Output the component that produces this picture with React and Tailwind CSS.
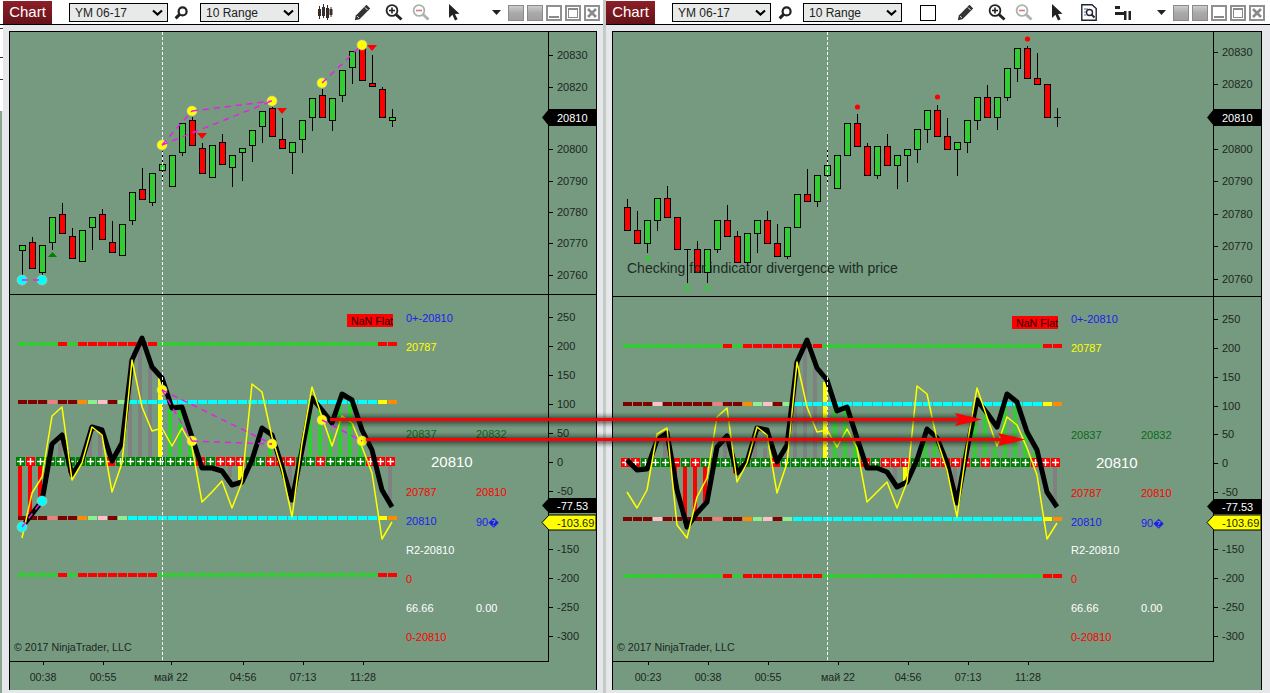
const BG = '#759a7f';
const UP = '#32cd32';
const DOWN = '#ff0000';

// candles: [color, bodyTop, bodyBottom, high, low] in page pixels
const leftCandles = [
  ['g', 245, 250, 245, 275], ['r', 242, 268, 237, 268], ['g', 245, 272, 245, 275], ['g', 217, 242, 217, 250],
  ['r', 214, 233, 203, 233], ['r', 236, 258, 228, 258], ['g', 230, 261, 230, 261], ['g', 217, 227, 217, 250],
  ['r', 214, 239, 209, 239], ['r', 242, 252, 221, 252], ['g', 224, 255, 224, 255], ['g', 192, 220, 192, 225],
  ['r', 189, 199, 168, 199], ['g', 173, 202, 173, 206], ['g', 164, 170, 151, 181], ['g', 155, 186, 155, 186],
  ['g', 123, 152, 123, 156], ['r', 120, 145, 117, 145], ['r', 148, 173, 143, 173], ['g', 145, 177, 145, 177],
  ['r', 142, 164, 134, 164], ['g', 155, 167, 155, 187], ['g', 148, 152, 148, 181], ['g', 130, 145, 130, 162],
  ['g', 111, 126, 111, 143], ['r', 108, 136, 107, 136], ['r', 139, 148, 118, 148], ['g', 142, 152, 142, 174],
  ['g', 120, 139, 120, 153], ['g', 98, 117, 98, 131], ['r', 95, 117, 89, 117], ['g', 98, 120, 98, 131],
  ['g', 70, 95, 70, 102], ['g', 51, 67, 51, 84], ['r', 48, 80, 45, 80], ['r', 83, 86, 55, 86],
  ['r', 89, 117, 87, 117], ['g', 117, 120, 109, 127],
];

const rightCandles = [
  ['r', 207, 230, 199, 230], ['r', 230, 243, 211, 243], ['g', 220, 243, 220, 253], ['g', 198, 220, 198, 231],
  ['r', 198, 217, 186, 217], ['r', 217, 249, 217, 249], ['d', 249, 249, 249, 283], ['r', 249, 272, 241, 272],
  ['g', 249, 272, 249, 283], ['g', 220, 249, 220, 253], ['r', 220, 236, 205, 236], ['r', 236, 262, 231, 262],
  ['g', 233, 262, 233, 265], ['g', 220, 233, 220, 253], ['r', 220, 243, 211, 243], ['r', 243, 256, 224, 256],
  ['g', 227, 256, 227, 259], ['g', 194, 227, 194, 227], ['r', 194, 201, 169, 201], ['g', 175, 201, 175, 207],
  ['g', 165, 175, 150, 182], ['g', 155, 188, 155, 188], ['g', 123, 155, 123, 155], ['r', 123, 146, 114, 146],
  ['r', 146, 175, 143, 175], ['g', 146, 175, 146, 179], ['r', 146, 165, 134, 165], ['g', 155, 165, 155, 189],
  ['g', 149, 155, 149, 182], ['g', 129, 149, 129, 163], ['g', 110, 129, 110, 143], ['r', 110, 136, 105, 136],
  ['r', 136, 149, 118, 149], ['g', 142, 149, 142, 176], ['g', 120, 142, 120, 153], ['g', 97, 120, 97, 130],
  ['r', 97, 117, 85, 117], ['g', 97, 117, 97, 130], ['g', 68, 97, 68, 101], ['g', 48, 68, 48, 82],
  ['r', 48, 78, 46, 78], ['r', 78, 84, 53, 84], ['r', 84, 117, 84, 117], ['d', 117, 117, 108, 127],
];

const LINE = { g: UP, r: '#ff0000' };
const MID = { d: '#800000', p: '#ffc0cb', s: '#f08080', o: '#ff8c00', l: '#90ee90', c: '#00ffff', y: '#ffff00' };

const leftBars = [
  [20, 466, 517, DOWN], [30, 466, 513, DOWN], [40, 466, 500, DOWN], [70, 466, 473, DOWN],
  [60, 443, 457, 'gray'], [90, 427, 457, 'gray'], [100, 433, 457, 'gray'], [130, 360, 457, 'gray'], [140, 340, 457, 'gray'], [150, 367, 457, 'gray'],
  [160, 378, 457, '#ffff00'], [170, 407, 457, UP], [180, 410, 457, UP], [190, 440, 457, UP],
  [230, 466, 477, 'gray'], [240, 466, 480, '#ffff00'], [270, 443, 457, UP], [290, 466, 500, 'gray'], [300, 450, 457, UP],
  [310, 400, 457, UP], [320, 410, 457, UP], [330, 433, 457, UP], [340, 395, 457, UP], [350, 400, 457, UP], [360, 437, 457, UP],
  [390, 466, 503, 'gray'],
];

const rightBars = [
  [675, 467, 488, DOWN], [685, 467, 523, DOWN], [695, 467, 513, DOWN], [705, 467, 502, DOWN], [735, 467, 473, DOWN],
  [665, 443, 458, 'gray'], [725, 443, 458, 'gray'], [755, 440, 458, 'gray'], [765, 448, 458, 'gray'], [795, 362, 458, 'gray'], [805, 342, 458, 'gray'], [815, 368, 458, 'gray'],
  [825, 382, 458, '#ffff00'], [835, 410, 458, UP], [845, 410, 458, UP], [855, 435, 458, UP],
  [895, 467, 480, 'gray'], [905, 467, 481, '#ffff00'], [925, 430, 458, UP], [935, 443, 458, UP],
  [955, 467, 503, 'gray'], [965, 450, 458, UP], [975, 410, 458, UP], [985, 413, 458, UP], [995, 447, 458, UP],
  [1005, 395, 458, UP], [1015, 402, 458, UP], [1025, 433, 458, UP], [1035, 450, 458, UP], [1055, 467, 503, 'gray'],
];

const leftBlack = '22,527 42,501 52,444 62,435 72,475 82,460 92,427 102,430 112,461 122,443 132,360 142,338 152,367 162,378 172,408 182,407 192,437 202,468 212,468 222,471 232,485 242,482 252,460 262,428 272,435 282,467 292,500 302,450 312,398 322,410 332,423 342,394 352,400 362,430 372,450 382,490 392,507';
const leftYellow = '22,538 32,493 42,477 52,416 62,407 72,480 82,463 92,427 102,435 112,492 122,463 132,360 142,407 152,431 162,428 172,446 182,428 192,447 202,502 212,492 222,481 232,508 242,482 252,384 262,392 272,437 282,470 292,517 302,443 312,387 322,417 332,446 342,416 352,423 362,447 372,473 382,539 392,522';
const rightBlack = '627,460 637,470 647,469 657,440 667,433 677,490 687,527 697,513 707,502 717,447 727,436 737,473 747,462 757,428 767,430 777,462 787,445 797,362 807,340 817,368 827,380 837,411 847,407 857,438 867,468 877,468 887,472 897,487 907,482 917,460 927,429 937,438 947,463 957,503 967,450 977,400 987,413 997,427 1007,394 1017,402 1027,432 1037,450 1047,492 1057,507';
const rightYellow = '627,492 637,508 647,490 657,434 667,428 677,525 687,538 697,497 707,478 717,417 727,408 737,482 747,463 757,427 767,435 777,493 787,463 797,362 807,407 817,432 827,430 837,447 847,429 857,448 867,502 877,492 887,482 897,508 907,482 917,386 927,394 937,440 947,470 957,517 967,445 977,388 987,417 997,446 1007,417 1017,425 1027,448 1037,475 1047,539 1057,523';

const leftCharts = {
  id: 'l',
  x0: 10, y0: 32, w: 586, h: 658,
  axisX: 548, splitY: 294, candleX: 22.5, candles: leftCandles,
  lineX: 18, lineTop: 342, lineMidA: 400, lineMidB: 516, lineBot: 573,
  lines: 'ggggrgrrrrrrrrgggggggggggggggggggggg' + 'rr',
  mids: 'dddsddolpdl' + 'c'.repeat(25) + 'yo',
  cellX: 16, cellY: 457,
  cells: 'G+ R+ G+ G- G+ G- G- G+ G+ R- G+ G+ G+ G+ G+ G+ G+ G+ R- G+ R+ R+ R+ G- G+ R+ R- R+ G- G+ R+ G+ G+ G+ G+ R+ R+ R+',
  bars: leftBars, black: leftBlack, yellow: leftYellow,
  cursorX: 162.5,
  priceTicks: [[20830, 55], [20820, 87], [20800, 149], [20790, 181], [20780, 212], [20770, 243], [20760, 275]],
  indTicks: [[250, 317], [200, 346], [150, 375], [100, 404], [50, 433], [0, 462], [-50, 491], [-150, 549], [-200, 578], [-250, 607], [-300, 636]],
  tagPrice: 118, tagBlack: 505.5, tagYellow: 522.5,
  times: [['00:38', 43], ['00:55', 103], ['май 22', 171], ['04:56', 243], ['07:13', 303], ['11:28', 363]],
  copyX: 14,
  labelX: 406, labelDy: 0, flagY: 314,
};

const rightCharts = {
  id: 'r',
  x0: 613, y0: 32, w: 648, h: 658,
  axisX: 1213, splitY: 296, candleX: 627.5, candles: rightCandles,
  lineX: 623, lineTop: 344, lineMidA: 402, lineMidB: 517, lineBot: 574,
  lines: 'ggggggggggrgrrrrrrrr' + 'g'.repeat(22) + 'rr',
  mids: 'dddpdddddsddolpdl' + 'c'.repeat(25) + 'yo',
  cellX: 621, cellY: 458,
  cells: 'R+ R+ G+ G+ G+ R- G+ R+ G+ G- G+ G- G- G+ G+ R- G+ G+ G+ G+ G+ G+ G+ G+ R- G+ R+ R+ R+ G- G+ R+ R- R+ R- G+ R+ G+ G+ G+ G+ R+ R+ R+',
  bars: rightBars, black: rightBlack, yellow: rightYellow,
  cursorX: 827.5,
  priceTicks: [[20830, 52], [20820, 84], [20800, 149], [20790, 181], [20780, 214], [20770, 246], [20760, 279]],
  indTicks: [[250, 319], [200, 348], [150, 377], [100, 406], [50, 434], [0, 463], [-50, 492], [-150, 549], [-200, 578], [-250, 607], [-300, 636]],
  tagPrice: 118, tagBlack: 506.5, tagYellow: 522.5,
  times: [['00:23', 648], ['00:38', 708], ['00:55', 768], ['май 22', 838], ['04:56', 908], ['07:13', 968], ['11:28', 1028]],
  copyX: 617,
  labelX: 1071, labelDy: 1, flagY: 316,
};

function Candles({ list, startX }) {
  return (
    <g shapeRendering="crispEdges">
      {list.map(([c, top, bot, hi, lo], i) => {
        const x = startX + i * 10;
        if (c === 'd') {
          return (
            <g key={i} stroke="black">
              <line x1={x} x2={x} y1={hi} y2={lo} />
              <line x1={x - 3.5} x2={x + 3.5} y1={top + 0.5} y2={top + 0.5} />
            </g>
          );
        }
        return (
          <g key={i} stroke="black">
            <line x1={x} x2={x} y1={hi} y2={lo} />
            <rect x={x - 3} y={top + 0.5} width="6" height={bot - top} fill={c === 'g' ? UP : DOWN} />
          </g>
        );
      })}
    </g>
  );
}

function Dashes({ startX, y, codes, palette }) {
  return (
    <g shapeRendering="crispEdges">
      {codes.split('').map((c, i) => (
        <rect key={i} x={startX + i * 10} y={y} width="9" height="4" fill={palette[c]} />
      ))}
    </g>
  );
}

function Cells({ startX, y, codes }) {
  return (
    <g>
      {codes.split(' ').map((c, i) => {
        const x = startX + i * 10;
        const cx = x + 4.5;
        const cy = y + 4.5;
        return (
          <g key={i}>
            <rect x={x} y={y} width="9" height="9" fill={c[0] === 'G' ? '#008000' : '#ff0000'} shapeRendering="crispEdges" />
            <rect x={cx - 3.5} y={cy - 0.7} width="7" height="1.4" fill="white" />
            {c[1] === '+' && <rect x={cx - 0.7} y={cy - 3.5} width="1.4" height="7" fill="white" />}
          </g>
        );
      })}
    </g>
  );
}

function Label({ x, y, fill, size = 11, children }) {
  return (
    <text x={x} y={y + 4} fill={fill} fontSize={size}>
      {children}
    </text>
  );
}

function Dot({ x, y, fill }) {
  return <circle cx={x} cy={y} r="5" fill={fill} stroke="#c4c8a8" strokeOpacity="0.6" />;
}

function Link({ a, b }) {
  return (
    <line x1={a[0]} y1={a[1]} x2={b[0]} y2={b[1]} stroke="#e81fe8" strokeWidth="1.5" strokeDasharray="6 5" />
  );
}

function LeftMarks() {
  const tri = [[202, 133], [282, 108], [372, 45]];
  return (
    <g>
      {[[22, 280], [42, 280], [22, 527], [42, 501]].map(([x, y], i) => <Dot key={i} x={x} y={y} fill="#00ffff" />)}
      {[[162, 145], [192, 111], [272, 101], [322, 83], [362, 45], [162, 390], [192, 441], [272, 444], [322, 420], [362, 441]].map(([x, y], i) => (
        <Dot key={i} x={x} y={y} fill="#ffff00" />
      ))}
      <Link a={[22, 280]} b={[42, 280]} />
      <Link a={[162, 145]} b={[192, 111]} />
      <Link a={[192, 111]} b={[272, 101]} />
      <Link a={[162, 145]} b={[272, 101]} />
      <Link a={[322, 83]} b={[362, 45]} />
      <Link a={[22, 527]} b={[42, 501]} />
      <Link a={[162, 390]} b={[192, 441]} />
      <Link a={[162, 390]} b={[272, 444]} />
      <Link a={[192, 441]} b={[272, 444]} />
      <Link a={[322, 420]} b={[362, 441]} />
      {tri.map(([x, y], i) => <polygon key={i} points={`${x - 5},${y} ${x + 5},${y} ${x},${y + 6}`} fill="#ff0000" />)}
      <polygon points="48,257 57,257 52.5,252" fill="#008000" />
    </g>
  );
}

function RightMarks() {
  return (
    <g>
      {[[857, 107], [937, 97], [1027, 39]].map(([x, y], i) => <circle key={i} cx={x + 0.5} cy={y} r="2.6" fill="#ff0000" />)}
      {[[647, 259], [687, 288], [707, 288]].map(([x, y], i) => (
        <polygon key={i} points={`${x + 0.5},${y - 3} ${x + 3.5},${y} ${x + 0.5},${y + 3} ${x - 2.5},${y}`} fill={UP} />
      ))}
      <text x="627" y="273" fontSize="14" fill="#1c2a24">Checking for indicator divergence with price</text>
    </g>
  );
}

function Tag({ x, y1, y2, fill, stroke, text, color }) {
  const mid = (y1 + y2) / 2;
  return (
    <g>
      <path d={`M${x - 7} ${mid} L${x} ${y1} H${x + 47} V${y2} H${x} Z`} fill={fill} stroke={stroke} />
      <text x={x + 8} y={mid + 4} fontSize="11" fill={color}>{text}</text>
    </g>
  );
}

function Chart({ d, children }) {
  const ax = d.axisX;
  const lx = d.labelX;
  const dy = d.labelDy;
  return (
    <svg width={d.w} height={d.h} viewBox={`${d.x0} ${d.y0} ${d.w} ${d.h}`} className="block">
      <defs>
        <clipPath id={`flag-${d.id}`}>
          <rect x={lx - 59} y={d.flagY} width="46" height="13" />
        </clipPath>
      </defs>
      <Candles list={d.candles} startX={d.candleX} />
      <g shapeRendering="crispEdges">
        {d.bars.map(([x, a, b, c], i) => <rect key={i} x={x - 2} y={a} width="4" height={b - a} fill={c} />)}
      </g>
      <Dashes startX={d.lineX} y={d.lineTop} codes={d.lines} palette={LINE} />
      <Dashes startX={d.lineX} y={d.lineMidA} codes={d.mids} palette={MID} />
      <Dashes startX={d.lineX} y={d.lineMidB} codes={d.mids} palette={MID} />
      <Dashes startX={d.lineX} y={d.lineBot} codes={d.lines} palette={LINE} />
      <Cells startX={d.cellX} y={d.cellY} codes={d.cells} />
      <polyline points={d.black} fill="none" stroke="black" strokeWidth="5" strokeLinejoin="round" />
      <polyline points={d.yellow} fill="none" stroke="#ffff00" strokeWidth="1.5" strokeLinejoin="round" />
      <line x1={d.cursorX} x2={d.cursorX} y1="32" y2="661" stroke="white" strokeDasharray="3 2" shapeRendering="crispEdges" />
      {children}

      {/* axis frame */}
      <g stroke="black" shapeRendering="crispEdges">
        <line x1={ax + 0.5} x2={ax + 0.5} y1="32" y2="662" />
        <line x1={d.x0} x2={d.x0 + d.w} y1={d.splitY + 0.5} y2={d.splitY + 0.5} />
        <line x1={d.x0} x2={ax + 1} y1="661.5" y2="661.5" />
        {[...d.priceTicks, ...d.indTicks].map(([, y], i) => <line key={i} x1={ax} x2={ax + 5} y1={y + 0.5} y2={y + 0.5} />)}
        {d.times.map(([, x], i) => <line key={i} x1={x + 0.5} x2={x + 0.5} y1="661" y2="665" />)}
      </g>
      {[...d.priceTicks, ...d.indTicks].map(([v, y], i) => (
        <Label key={i} x={ax + 9} y={y} fill="#20261f">{v}</Label>
      ))}
      {d.times.map(([t, x], i) => (
        <text key={i} x={x} y="681" fontSize="10.67" fill="#20261f" textAnchor="middle">{t}</text>
      ))}
      <text x={d.copyX} y="651" fontSize="10.67" fill="#20261f">© 2017 NinjaTrader, LLC</text>

      {/* price tags */}
      <Tag x={ax + 1} y1={109} y2={126} fill="black" text="20810" color="white" />
      <Tag x={ax + 1} y1={d.tagBlack - 7.5} y2={d.tagBlack + 7.5} fill="black" text="-77.53" color="white" />
      <Tag x={ax + 1} y1={d.tagYellow - 7.5} y2={d.tagYellow + 7.5} fill="#ffff00" stroke="black" text="-103.69" color="#20261f" />

      {/* indicator read-outs */}
      <rect x={lx - 59} y={d.flagY} width="46" height="13" fill="#ff0000" />
      <text x={lx - 55} y={d.flagY + 10.5} fontSize="10.67" fill="#200" clipPath={`url(#flag-${d.id})`}>NaN Flat</text>
      <Label x={lx} y={318 + dy} fill="#1c1cf0">0+-20810</Label>
      <Label x={lx} y={347 + dy} fill="#ffff00">20787</Label>
      <Label x={lx} y={434 + dy} fill="#0a6a18">20837</Label>
      <Label x={lx + 70} y={434 + dy} fill="#0a6a18">20832</Label>
      <Label x={lx + 25} y={463 + dy} fill="white" size={15}>20810</Label>
      <Label x={lx} y={492 + dy} fill="#ff0000">20787</Label>
      <Label x={lx + 70} y={492 + dy} fill="#ff0000">20810</Label>
      <Label x={lx} y={521 + dy} fill="#1c1cf0">20810</Label>
      <Label x={lx + 70} y={522 + dy} fill="#1c1cf0">90�</Label>
      <Label x={lx} y={550} fill="white">R2-20810</Label>
      <Label x={lx} y={579} fill="#ff0000">0</Label>
      <Label x={lx} y={608} fill="white">66.66</Label>
      <Label x={lx + 70} y={608} fill="white">0.00</Label>
      <Label x={lx} y={637} fill="#ff0000">0-20810</Label>
    </svg>
  );
}

function Select({ label, className }) {
  return (
    <div className={`flex h-[19px] w-[99px] shrink-0 items-center justify-between border border-black bg-[#e8e9e9] pl-[5px] pr-[4px] text-[12px] text-[#222] ${className}`}>
      <span>{label}</span>
      <svg width="11" height="7" viewBox="0 0 11 7"><path d="M1 1.5 L5.5 5.5 L10 1.5" fill="none" stroke="black" strokeWidth="2.2" /></svg>
    </div>
  );
}

function SearchIcon({ className }) {
  return (
    <svg width="14" height="14" viewBox="0 0 14 14" className={`shrink-0 ${className}`}>
      <circle cx="8.6" cy="5.4" r="4" fill="none" stroke="#222" strokeWidth="2.2" />
      <line x1="5.6" y1="8.4" x2="1.6" y2="12.4" stroke="#222" strokeWidth="3" />
    </svg>
  );
}

function PencilIcon({ className }) {
  return (
    <svg width="17" height="17" viewBox="0 0 17 17" className={`shrink-0 ${className}`}>
      <path d="M12.5 0.8 L16.2 4.5 L5.5 15.2 L0.8 16.2 L1.8 11.5 Z" fill="#333" />
      <path d="M11 3.5 L13.5 6" stroke="white" strokeWidth="1" />
      <path d="M3 12 L5 14" stroke="white" strokeWidth="0.8" />
    </svg>
  );
}

function ZoomIcon({ plus, className }) {
  const c = plus ? '#222' : '#aeb2ae';
  return (
    <svg width="18" height="17" viewBox="0 0 18 17" className={`shrink-0 ${className}`}>
      <circle cx="7" cy="6.5" r="5.4" fill="none" stroke={c} strokeWidth="1.8" />
      <line x1="4" y1="6.5" x2="10" y2="6.5" stroke={plus ? '#222' : '#c88080'} strokeWidth="1.6" />
      {plus && <line x1="7" y1="3.5" x2="7" y2="9.5" stroke="#222" strokeWidth="1.6" />}
      <line x1="11" y1="10.5" x2="16.5" y2="15.5" stroke={c} strokeWidth="3" />
    </svg>
  );
}

function ArrowIcon({ className }) {
  return (
    <svg width="11" height="17" viewBox="0 0 11 17" className={`shrink-0 ${className}`}>
      <polygon points="0,0 0,14 3.4,10.8 6,16.5 8.6,15.3 6,10 10.5,9.8" fill="#222" />
    </svg>
  );
}

function BarsIcon({ className }) {
  return (
    <svg width="16" height="17" viewBox="0 0 16 17" className={`shrink-0 ${className}`}>
      <path d="M2.5 2 V15 M6.5 0 V14 M10.5 1 V16 M14 3 V13" stroke="#3a2a20" />
      <rect x="1" y="5" width="3" height="7" fill="#3a2a20" />
      <rect x="5" y="3" width="3" height="9" fill="#333" />
      <rect x="9" y="4" width="3" height="10" fill="#3a2a20" />
      <rect x="12.5" y="5" width="3" height="6" fill="#333" />
    </svg>
  );
}

function ReportIcon({ className }) {
  return (
    <svg width="16" height="17" viewBox="0 0 16 17" className={`shrink-0 ${className}`}>
      <path d="M0.8 0.8 H11 L15.2 4.5 V16.2 H0.8 Z" fill="white" stroke="#223" strokeWidth="1.4" />
      <path d="M3 5 H7 M3 8 H5 M3 11 H5" stroke="#567" />
      <circle cx="8.5" cy="8.5" r="3" fill="none" stroke="#223" strokeWidth="1.4" />
      <line x1="10.5" y1="10.5" x2="13.5" y2="13.5" stroke="#223" strokeWidth="2" />
    </svg>
  );
}

function RowsIcon({ className }) {
  return (
    <svg width="17" height="16" viewBox="0 0 17 16" className={`shrink-0 ${className}`}>
      <rect x="0" y="1" width="5" height="3" fill="#222" />
      <rect x="0" y="7" width="9" height="3" fill="#222" />
      <rect x="9" y="6" width="2.5" height="9" fill="#222" />
      <rect x="13.5" y="6" width="2.5" height="9" fill="#222" />
    </svg>
  );
}

function WinButtons({ className }) {
  const box = 'h-[16px] w-[16px] border-2 border-[#909090] bg-white';
  const gray = 'h-[16px] w-[16px] border border-[#8a8a8a] bg-linear-to-b from-[#cdcdcd] via-[#aaa8a8] to-[#a39f9f]';
  return (
    <div className={`flex shrink-0 items-center gap-[3px] ${className}`}>
      <svg width="9" height="5" viewBox="0 0 9 5" className="mr-[4px]"><polygon points="0,0 9,0 4.5,5" fill="#222" /></svg>
      <div className={gray} />
      <div className={gray} />
      <div className={`${box} flex items-end justify-center pb-[1px]`}><div className="h-[2px] w-[10px] bg-[#8a8a8a]" /></div>
      <div className={`${box} p-[1px]`}><div className="h-full w-full border border-[#8a8a8a] border-t-2" /></div>
      <div className={`${box} flex items-center justify-center`}>
        <svg width="10" height="10" viewBox="0 0 10 10"><path d="M1 1 L9 9 M9 1 L1 9" stroke="#8a8a8a" strokeWidth="2.6" /></svg>
      </div>
    </div>
  );
}

function ChartTab({ className = '' }) {
  return (
    <div className={`mt-[1px] flex h-[23px] w-[49px] shrink-0 items-center justify-center bg-linear-to-b from-[#8e1f27] to-[#661219] text-[15px] text-white ${className}`}>
      Chart
    </div>
  );
}

function LeftToolbar() {
  return (
    <div className="flex h-[25px] items-start border-b border-black bg-white">
      <ChartTab className="ml-[3px]" />
      <div className="flex h-[25px] items-center">
        <Select label="YM 06-17" className="ml-[17px]" />
        <SearchIcon className="ml-[6px]" />
        <Select label="10 Range" className="ml-[12px]" />
        <BarsIcon className="ml-[18px]" />
        <PencilIcon className="ml-[21px]" />
        <ZoomIcon plus className="ml-[14px]" />
        <ZoomIcon className="ml-[9px]" />
        <ArrowIcon className="ml-[19px]" />
        <WinButtons className="ml-[32px]" />
      </div>
    </div>
  );
}

function RightToolbar() {
  return (
    <div className="flex h-[25px] items-start border-b border-black bg-white">
      <ChartTab />
      <div className="flex h-[25px] items-center">
        <Select label="YM 06-17" className="ml-[17px]" />
        <SearchIcon className="ml-[7px]" />
        <Select label="10 Range" className="ml-[11px]" />
        <div className="ml-[18px] h-[16px] w-[16px] shrink-0 border border-black bg-white" />
        <PencilIcon className="ml-[21px]" />
        <ZoomIcon plus className="ml-[14px]" />
        <ZoomIcon className="ml-[9px]" />
        <ArrowIcon className="ml-[19px]" />
        <ReportIcon className="ml-[18px]" />
        <RowsIcon className="ml-[18px]" />
        <WinButtons className="ml-[25px]" />
      </div>
    </div>
  );
}

function RedArrows() {
  return (
    <svg width="1270" height="693" viewBox="0 0 1270 693" className="pointer-events-none absolute left-0 top-0">
      <defs>
        <filter id="soft" x="-5%" y="-300%" width="110%" height="700%">
          <feGaussianBlur stdDeviation="2" />
        </filter>
      </defs>
      <g filter="url(#soft)" stroke="#222" strokeOpacity="0.6" strokeWidth="8">
        <line x1="330" y1="420" x2="975" y2="420" />
        <line x1="366" y1="440" x2="1018" y2="440" />
      </g>
      <g fill="#ff0000" stroke="#ff0000" strokeWidth="3">
        <line x1="330" y1="419.5" x2="958" y2="419.5" />
        <line x1="366" y1="439.5" x2="1001" y2="439.5" />
      </g>
      <polygon points="955,413 982,419.5 955,426 959,419.5" fill="#ff0000" />
      <polygon points="998,433 1025,439.5 998,446 1002,439.5" fill="#ff0000" />
    </svg>
  );
}

export default function App() {
  return (
    <div className="relative flex h-[693px] w-[1270px] overflow-hidden bg-[#e6e7ea] font-['Liberation_Sans',Arial,sans-serif]">
      {/* left chart window */}
      <div className="flex w-[606px] shrink-0 flex-col border-r-[3px] border-[#c4cac4]">
        <LeftToolbar />
        <div className="flex flex-1">
          <div className="flex w-[3px] flex-col">
            <div className="h-[4px] border-b border-[#333] bg-white" />
            <div className="h-[29px] border-b border-[#333] bg-white" />
            <div className="h-[22px] border-b border-[#333] bg-white" />
            <div className="h-[31px] bg-white" />
            <div className="w-[2px] flex-1 bg-[#88a58f]" />
          </div>
          <div className="ml-[6px] mt-[6px] h-[659px] w-[588px] border-x border-t border-black" style={{ background: BG }}>
            <Chart d={leftCharts}>
              <LeftMarks />
            </Chart>
          </div>
        </div>
      </div>

      {/* right chart window */}
      <div className="flex w-[664px] shrink-0 flex-col">
        <RightToolbar />
        <div className="flex-1 pl-[6px] pt-[6px]">
          <div className="h-[659px] w-[650px] border-x border-t border-black" style={{ background: BG }}>
            <Chart d={rightCharts}>
              <RightMarks />
            </Chart>
          </div>
        </div>
      </div>

      <RedArrows />
    </div>
  );
}
